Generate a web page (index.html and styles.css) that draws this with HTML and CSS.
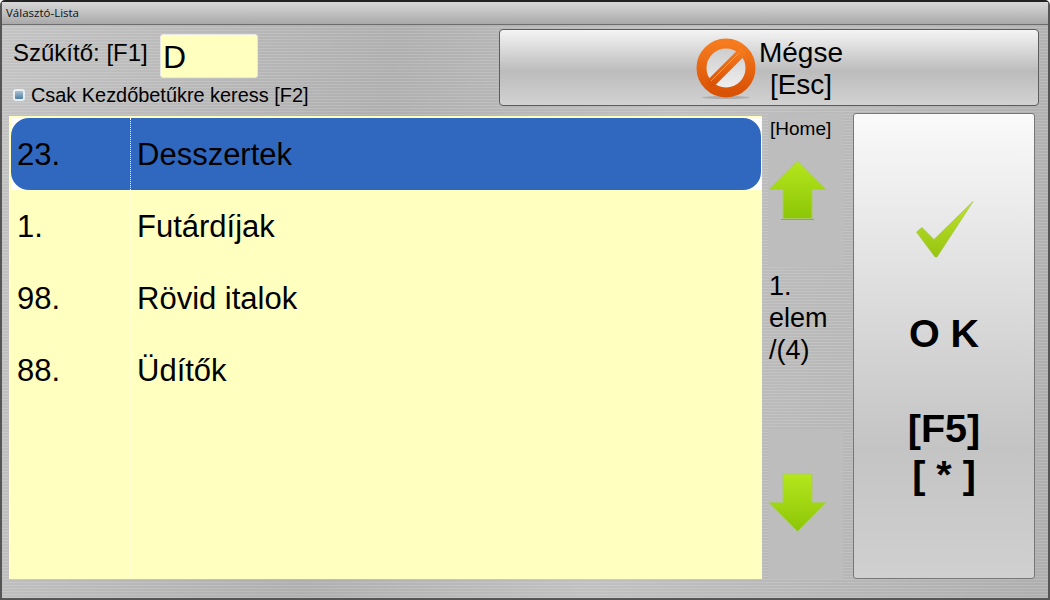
FILE: index.html
```html
<!DOCTYPE html>
<html>
<head>
    <title>Választó-Lista</title>
    <link rel="stylesheet" href="styles.css">
</head>
<body>
    <div class="window">
        <div class="titlebar">Választó-Lista</div>
        <div class="content">
            <!-- Filter and cancel -->
            <div class="top-row">
                <div class="filter">
                    <div class="filter-line">
                        <span class="filter-label">Szűkítő: [F1]</span>
                        <div class="filter-input">D</div>
                    </div>
                    <div class="check-line">
                        <span class="checkbox"></span>
                        <span>Csak Kezdőbetűkre keress [F2]</span>
                    </div>
                </div>
                <div class="cancel-button">
                    <svg class="cancel-icon" width="62" height="64" viewBox="0 0 62 64">
                        <defs>
                            <linearGradient id="ringFill" x1="0" y1="0" x2="0" y2="1">
                                <stop offset="0" stop-color="#f57b1e"/>
                                <stop offset="1" stop-color="#da5205"/>
                            </linearGradient>
                            <linearGradient id="faceFill" x1="0" y1="0" x2="0" y2="1">
                                <stop offset="0" stop-color="#c9c9c9"/>
                                <stop offset="1" stop-color="#f2f2f2"/>
                            </linearGradient>
                        </defs>
                        <ellipse cx="31" cy="59.5" rx="24" ry="1.5" fill="#8d8d8d" opacity="0.5"/>
                        <circle cx="31" cy="30" r="24" fill="url(#faceFill)"/>
                        <circle cx="31" cy="30" r="24.5" fill="none" stroke="url(#ringFill)" stroke-width="10"/>
                        <path d="M14 47 L48 13" stroke="url(#ringFill)" stroke-width="9"/>
                        <path d="M16 43 L44 15" stroke="#f9a15c" stroke-width="1"/>
                    </svg>
                    <div class="cancel-text">Mégse<br>[Esc]</div>
                </div>
            </div>

            <div class="main-row">
                <!-- List -->
                <div class="list">
                    <div class="list-row selected">
                        <div class="row-inner">
                            <div class="list-num">23.</div>
                            <div class="list-name">Desszertek</div>
                        </div>
                    </div>
                    <div class="list-row">
                        <div class="row-inner">
                            <div class="list-num">1.</div>
                            <div class="list-name">Futárdíjak</div>
                        </div>
                    </div>
                    <div class="list-row">
                        <div class="row-inner">
                            <div class="list-num">98.</div>
                            <div class="list-name">Rövid italok</div>
                        </div>
                    </div>
                    <div class="list-row">
                        <div class="row-inner">
                            <div class="list-num">88.</div>
                            <div class="list-name">Üdítők</div>
                        </div>
                    </div>
                </div>

                <!-- Paging -->
                <div class="pager">
                    <div class="pager-button up">
                        <div class="home-label">[Home]</div>
                        <svg width="60" height="62" viewBox="0 0 60 62">
                            <defs>
                                <linearGradient id="upFill" x1="0" y1="0" x2="0" y2="1">
                                    <stop offset="0" stop-color="#b5e61d"/>
                                    <stop offset="1" stop-color="#8cc606"/>
                                </linearGradient>
                            </defs>
                            <path d="M29.5 1 L58 29.5 H44 V58.5 H15 V29.5 H1 Z" fill="url(#upFill)" stroke="#a9cc62" stroke-width="1"/>
                            <rect x="13" y="59" width="33" height="1" fill="#7d7d7d" opacity="0.6"/>
                        </svg>
                    </div>
                    <div class="pager-text">1.<br>elem<br>/(4)</div>
                    <div class="pager-button down">
                        <svg width="60" height="60" viewBox="0 0 60 60">
                            <defs>
                                <linearGradient id="downFill" x1="0" y1="0" x2="0" y2="1">
                                    <stop offset="0" stop-color="#b5e61d"/>
                                    <stop offset="1" stop-color="#8cc606"/>
                                </linearGradient>
                            </defs>
                            <path d="M15 1 H44 V29.5 H58 L29.5 58.5 L1 29.5 H15 Z" fill="url(#downFill)" stroke="#a9cc62" stroke-width="1"/>
                        </svg>
                    </div>
                </div>

                <!-- OK -->
                <div class="ok-button">
                    <svg class="ok-check" width="58" height="58" viewBox="0 0 58 58">
                        <defs>
                            <linearGradient id="checkFill" x1="0" y1="0" x2="0" y2="1">
                                <stop offset="0" stop-color="#bde22e"/>
                                <stop offset="1" stop-color="#97c40f"/>
                            </linearGradient>
                        </defs>
                        <path d="M0.5 31 L6 26.5 L18 38.5 L57 0.5 L21 56 H19 Z" fill="url(#checkFill)" stroke="#a6c653" stroke-width="0.8" stroke-linejoin="round"/>
                    </svg>
                    <div class="ok-text">O K</div>
                    <div class="ok-keys">[F5]<br>[ * ]</div>
                </div>
            </div>
        </div>
    </div>
</body>
</html>
```

FILE: styles.css
```css
html, body {
    margin: 0;
    padding: 0;
}
body {
    width: 1050px;
    height: 600px;
    overflow: hidden;
    font-family: "Liberation Sans", Arial, sans-serif;
    color: #000;
}
.window {
    box-sizing: border-box;
    width: 1050px;
    height: 600px;
    display: flex;
    flex-direction: column;
    border: 2px solid #555;
    border-top-color: #222;
    border-radius: 5px 5px 0 0;
    background-color: #bdbdbd;
    background-image:
        repeating-linear-gradient(0deg, rgba(255, 255, 255, 0.07) 0, rgba(255, 255, 255, 0.07) 1px, rgba(0, 0, 0, 0.03) 1px, rgba(0, 0, 0, 0.03) 3px),
        linear-gradient(100deg, #c9c9c9 0%, #b5b5b5 35%, #c6c6c6 60%, #b4b4b4 100%);
}
.titlebar {
    box-sizing: border-box;
    height: 23px;
    padding: 2px 0 0 4px;
    font-family: "Open Sans", sans-serif;
    font-size: 11.5px;
    line-height: 18px;
    color: #111;
    background: linear-gradient(#d8d8d8, #a9a9a9);
    border-bottom: 1px solid #6d6d6d;
}
.content {
    flex: 1;
    display: flex;
    flex-direction: column;
    padding: 4px 9px 0 7px;
    min-height: 0;
}

/* Top row */
.top-row {
    display: flex;
    justify-content: space-between;
    height: 77px;
    flex: none;
}
.filter {
    width: 480px;
}
.filter-line {
    display: flex;
    align-items: flex-start;
    padding: 5px 0 0 4px;
}
.filter-label {
    font-size: 24px;
    line-height: 27px;
    margin-top: 5px;
    width: 147px;
}
.filter-input {
    box-sizing: border-box;
    width: 98px;
    height: 44px;
    padding: 4px 0 0 2px;
    font-size: 32px;
    line-height: 36px;
    background-color: #ffffbf;
    border: 1px solid #e6e6e6;
    border-radius: 3px;
}
.check-line {
    display: flex;
    align-items: center;
    margin: 5px 0 0 4px;
    font-size: 19.9px;
    line-height: 24px;
}
.checkbox {
    box-sizing: border-box;
    width: 12px;
    height: 12px;
    margin-right: 6px;
    border: 2px solid #e8eef2;
    border-radius: 3px;
    background: linear-gradient(#a9c3d6, #4f7da0);
}
.cancel-button {
    box-sizing: border-box;
    width: 540px;
    display: flex;
    justify-content: center;
    align-items: center;
    border: 1px solid #5c5c5c;
    border-radius: 4px;
    background: linear-gradient(#f4f4f4, #bcbcbc 55%, #d2d2d2);
}
.cancel-icon {
    margin-top: 5px;
}
.cancel-text {
    font-size: 28px;
    line-height: 32px;
    text-align: center;
    margin: 2px 0 0 2px;
}

/* Main row */
.main-row {
    flex: 1;
    display: flex;
    margin-top: 7px;
    padding-bottom: 19px;
    min-height: 0;
}
.list {
    width: 753px;
    margin-top: 3px;
    padding: 2px 1px 0 2px;
    box-sizing: border-box;
    background-color: #ffffbf;
    background-image: linear-gradient(#ffffd2, #ffffd2);
    background-size: 1px 100%;
    background-position: 121px 0;
    background-repeat: no-repeat;
}
.list-row {
    height: 72px;
    font-size: 31px;
}
.list-row.selected {
    background-color: #fff;
}
.row-inner {
    height: 100%;
    display: flex;
}
.selected .row-inner {
    background-color: #3068c0;
    border-radius: 18px;
}
.list-num,
.list-name {
    box-sizing: border-box;
    display: flex;
    align-items: center;
    padding-top: 2px;
}
.list-num {
    width: 119px;
    padding-left: 6px;
}
.list-name {
    flex: 1;
    padding-left: 7px;
}
.selected .list-name {
    border-left: 1px dotted #fff;
    padding-left: 6px;
}

/* Pager */
.pager {
    width: 83px;
    display: flex;
    flex-direction: column;
    flex: none;
    padding: 0 2px 0 6px;
    box-sizing: border-box;
}
.pager-button {
    background-color: #bdbdbd;
    flex: none;
}
.pager-button.up {
    height: 153px;
    display: flex;
    flex-direction: column;
}
.home-label {
    font-size: 19px;
    line-height: 22px;
    margin: 5px 0 20px 2px;
}
.pager-text {
    flex: 1;
    font-size: 27px;
    line-height: 32px;
    padding: 4px 0 0 1px;
}
.pager-button.down {
    height: 150px;
    padding-top: 44px;
    box-sizing: border-box;
}
.ok-button {
    box-sizing: border-box;
    width: 182px;
    margin-left: 8px;
    display: flex;
    flex-direction: column;
    align-items: center;
    border: 1px solid #777;
    border-radius: 3px;
    background: linear-gradient(#fafafa, #c4c4c4 72%, #d0d0d0);
    font-weight: bold;
    font-size: 39.5px;
    line-height: 46px;
    text-align: center;
}
.ok-check {
    margin: 87px 0 0 2px;
}
.ok-text {
    margin-top: 51px;
}
.ok-keys {
    margin-top: 49px;
}
```
